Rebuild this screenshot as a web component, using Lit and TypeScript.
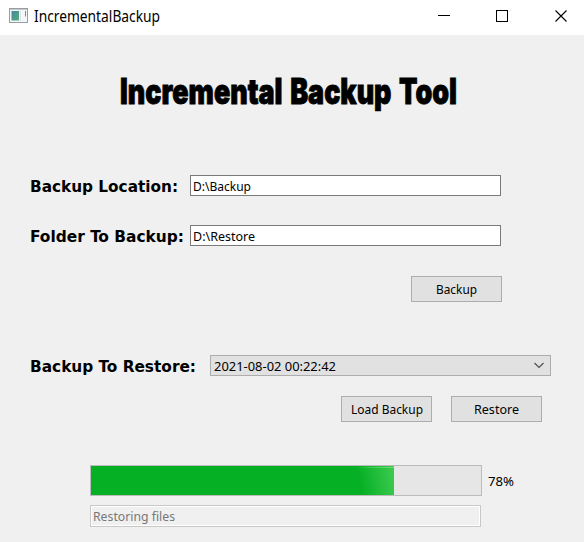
import { LitElement, html, css, svg } from "lit";
import { customElement, property } from "lit/decorators.js";

/** A single line of text set to an exact advance width; baseline 15px below its top. */
@customElement("fit-text")
class FitText extends LitElement {
  @property() text = "";
  @property({ type: Number }) width = 0;
  static styles = css`
    :host { display: block; flex: none; height: 20px; }
    svg { display: block; overflow: visible; }
    text { fill: currentColor; stroke: currentColor; stroke-width: var(--weight, 0); }
  `;
  render() {
    return html`<svg width=${this.width} height="20">
      ${svg`<text x="0" y="15" textLength=${this.width} lengthAdjust="spacingAndGlyphs">${this.text}</text>`}
    </svg>`;
  }
}

@customElement("app-root")
class AppRoot extends LitElement {
  @property({ type: Number }) progress = 78;

  static styles = css`
    :host {
      display: flex; flex-direction: column; width: 584px; height: 542px; overflow: hidden;
      background: #f0f0f0; color: #000;
      font: 12.5px "Noto Sans", sans-serif;
    }
    * { box-sizing: border-box; }
    svg { display: block; flex: none; }
    .titlebar { display: flex; height: 35px; background: #fff; padding: 7px 0 0 9px; flex: none; }
    .caption { font: 15.5px "Noto Sans", sans-serif; margin-left: 6px; flex: 1; }
    .controls { display: flex; gap: 46px; padding: 2px 16px 0 0; }
    .title { padding: 54px 0 0 120px; height: 140px; font: 900 35px Inter, sans-serif; word-spacing: 3px; --weight: 0.9px; }
    .row { display: flex; height: 21px; margin-bottom: 29px; padding-left: 30px; flex: none; }
    .label { font: bold 15px "DejaVu Sans Condensed", "DejaVu Sans", sans-serif; padding-top: 2px; width: 160px; }
    .label.wide { width: 180px; }
    .field { width: 311px; height: 21px; background: #fff; border: 1px solid #7a7a7a; padding-left: 2px; }
    .combo { display: flex; justify-content: space-between; width: 341px; height: 21px; background: #e1e1e1; border: 1px solid #adadad; padding: 0 6px 0 3px; }
    .combo svg { margin-top: 6px; }
    .actions { display: flex; gap: 19px; height: 26px; flex: none; margin-top: 1px; }
    .first { padding-left: 411px; margin-bottom: 53px; }
    .second { padding-left: 341px; margin-top: -9px; margin-bottom: 43px; }
    .button { display: flex; justify-content: center; width: 91px; height: 26px; background: #e1e1e1; border: 1px solid #adadad; padding-top: 2px; }
    .progress { display: flex; height: 31px; padding-left: 90px; gap: 6px; flex: none; }
    .track { width: 392px; height: 31px; background: #e6e6e6; border: 1px solid #bcbcbc; }
    .fill {
      height: 100%;
      background:
        linear-gradient(90deg, #70da7500, #70da75) right 1px / 38px 1px no-repeat,
        linear-gradient(80deg, #06b02500 25%, #3ecb50 100%) right / 44px 100% no-repeat,
        #06b025;
    }
    .percent { padding-top: 6px; }
    .status { margin: 9px 0 0 90px; width: 391px; height: 22px; flex: none; border: 1px solid #c8c8c8; box-shadow: inset 0 0 0 1px #fff; color: #787878; padding-left: 2px; }
  `;

  private button(text: string, width: number) {
    return html`<div class="button"><fit-text .text=${text} .width=${width}></fit-text></div>`;
  }

  render() {
    return html`
      <div class="titlebar">
        <svg width="19" height="16" viewBox="0 0 19 16">
          <defs><linearGradient id="screen" x2="1" y2="1"><stop stop-color="#4686a0"/><stop offset="1" stop-color="#57ad79"/></linearGradient></defs>
          <rect x=".5" y="1.5" width="18" height="14" fill="#f4f6f7" stroke="#989da5"/>
          <path d="M1 2.5h17" stroke="#c5c9ce"/>
          <rect x="2.5" y="4" width="7.5" height="9.5" fill="url(#screen)"/>
          <path d="M11.5 4v10" stroke="#d6dde0"/>
          <path d="M12.5 4v9" stroke="#fff"/>
          <path d="M16.5 4v5.5" stroke="#5b9b9a"/>
        </svg>
        <fit-text class="caption" .text=${"IncrementalBackup"} .width=${126}></fit-text>
        <div class="controls">
          <svg width="12" height="14"><path d="M0 6.5h12" stroke="#000"/></svg>
          <svg width="13" height="14"><rect x=".5" y="1.5" width="11" height="11" fill="none" stroke="#000"/></svg>
          <svg width="13" height="14"><path d="M.5 1.5l11 11M11.5 1.5l-11 11" fill="none" stroke="#000" stroke-width="1.1"/></svg>
        </div>
      </div>

      <div class="title">
        <fit-text .text=${"Incremental Backup Tool"} .width=${337}></fit-text>
      </div>

      <div class="row">
        <div class="label"><fit-text .text=${"Backup Location:"} .width=${148}></fit-text></div>
        <div class="field"><fit-text .text=${"D:\\Backup"} .width=${58}></fit-text></div>
      </div>
      <div class="row">
        <div class="label"><fit-text .text=${"Folder To Backup:"} .width=${154}></fit-text></div>
        <div class="field"><fit-text .text=${"D:\\Restore"} .width=${62}></fit-text></div>
      </div>
      <div class="actions first">${this.button("Backup", 41)}</div>

      <div class="row">
        <div class="label wide"><fit-text .text=${"Backup To Restore:"} .width=${166}></fit-text></div>
        <div class="combo">
          <fit-text .text=${"2021-08-02 00:22:42"} .width=${122}></fit-text>
          <svg width="10" height="7"><path d="M.5 1l4.5 4.5L9.5 1" fill="none" stroke="#505050" stroke-width="1.2"/></svg>
        </div>
      </div>
      <div class="actions second">
        ${this.button("Load Backup", 72)} ${this.button("Restore", 45)}
      </div>

      <div class="progress">
        <div class="track"><div class="fill" style="width:${(this.progress * 303) / 78}px"></div></div>
        <div class="percent"><fit-text .text=${this.progress + "%"} .width=${26}></fit-text></div>
      </div>
      <div class="status"><fit-text .text=${"Restoring files"} .width=${82}></fit-text></div>
    `;
  }
}
